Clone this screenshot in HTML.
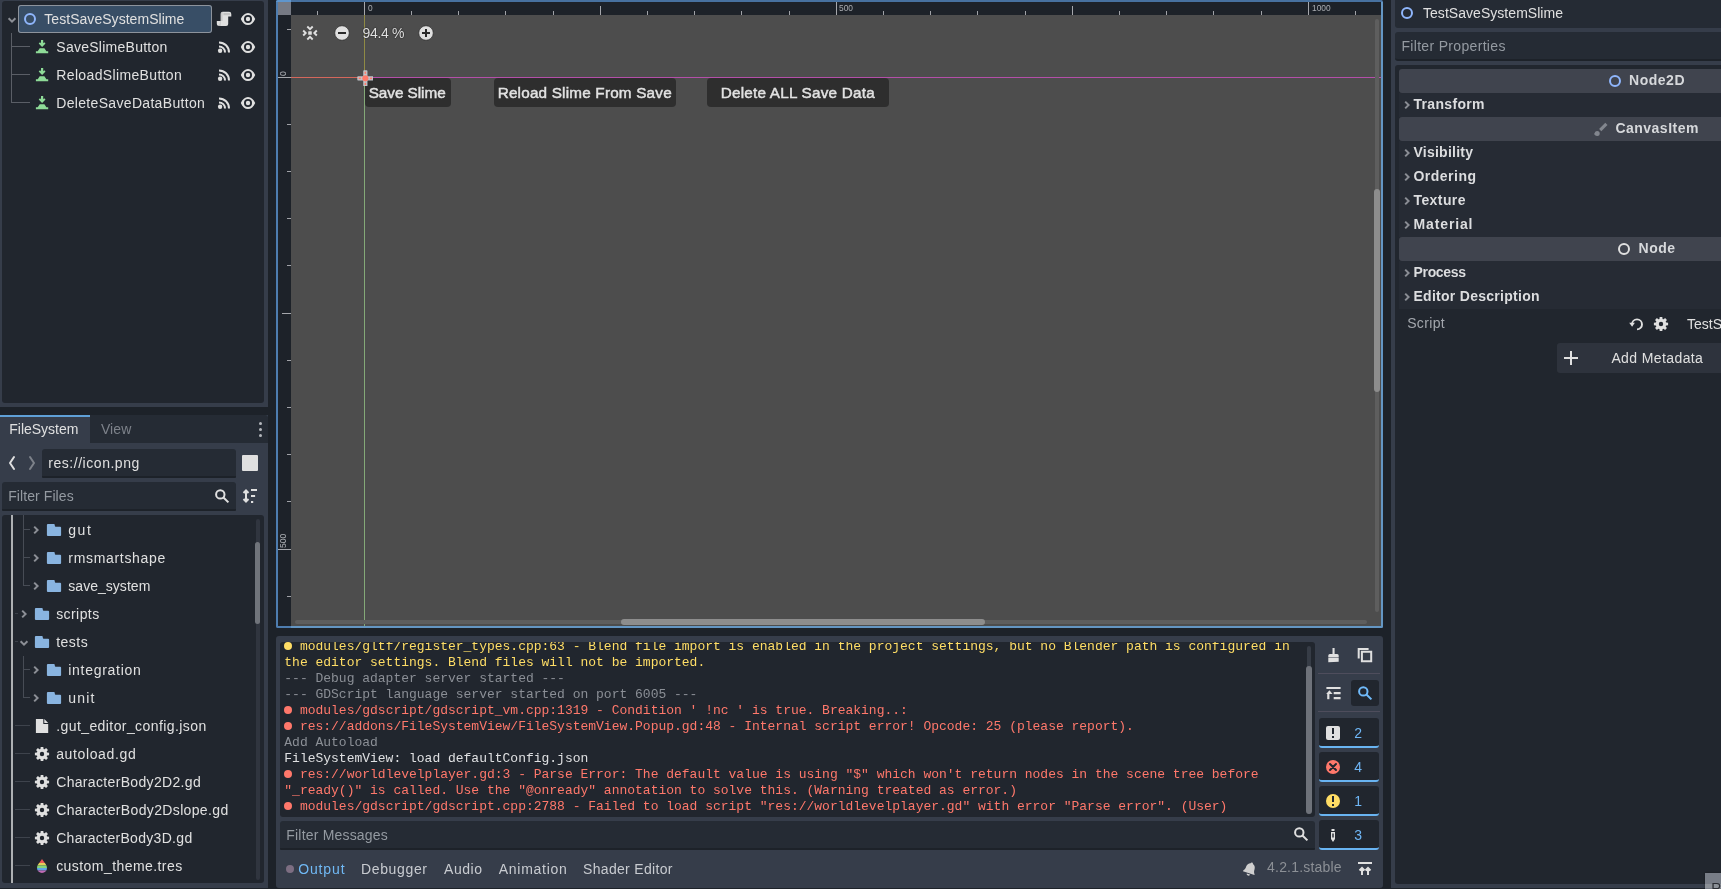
<!DOCTYPE html>
<html><head><meta charset="utf-8"><title>Godot</title>
<style>
html,body{margin:0;padding:0;background:#363d4a;overflow:hidden;}
body{width:1721px;height:889px;position:relative;overflow:hidden;font-family:"Liberation Sans",sans-serif;}
#r{position:absolute;left:0;top:0;width:1721px;height:889px;will-change:transform;overflow:hidden;}
.b{position:absolute;display:block;}
.t{position:absolute;white-space:pre;line-height:20px;height:20px;}
.m{font-family:"Liberation Mono",monospace;}
</style></head><body><div id="r">
<div class="b" style="left:0px;top:0px;width:1721px;height:889px;background:#363d4a;"></div>
<div class="b" style="left:268px;top:0px;width:1123px;height:889px;background:#1d2229;"></div>
<div class="b" style="left:0px;top:407px;width:268px;height:8px;background:#1d2229;"></div>
<div class="b" style="left:2px;top:1px;width:262px;height:402px;background:#21262e;border-radius:3px;"></div>
<div class="b" style="left:18px;top:5px;width:194px;height:28px;background:#384e66;border-radius:3px;box-shadow:inset 0 0 0 1px #8d939c;"></div>
<svg class="b" style="left:6px;top:15.5px;" width="12" height="8" viewBox="0 0 12 8"><path d="M2.6 2.2l3.4 3.4L9.4 2.2" fill="none" stroke="#8c8f96" stroke-width="2" stroke-linecap="butt" stroke-linejoin="miter"/></svg>
<svg class="b" style="left:22px;top:11px;" width="16" height="16" viewBox="0 0 16 16"><circle cx="8" cy="8" r="5" fill="none" stroke="#8fb6fc" stroke-width="2"/></svg>
<span class="t" style="left:44.30px;top:9.35px;font-size:14px;color:#e0e0e0;font-weight:400;letter-spacing:0.041px;">TestSaveSystemSlime</span>
<svg class="b" style="left:216px;top:11px;" width="16" height="16" viewBox="0 0 16 16"><path fill="#e0e0e0" d="M6.600 .7a2 2 0 0 0-2 2v7.400H.8v2.500a2.500 2.500 0 0 0 2.500 2.500h6.900a2 2 0 0 0 2-2V5.400h3.100V2.900a2.200 2.200 0 0 0-2.200-2.200z"/><path fill="#000" opacity=".13" d="M4.600 10.100h-.7v2.500a1.400 1.400 0 0 1-1.300 1.400c.2.600.4 1.100.7 1.100h1.300zM7.400 2h5.900a.9.900 0 0 1 .9.900v1.300H7.400z"/><path fill="#000" opacity=".1" d="M4.600 2.700a2 2 0 0 1 2-2v9.400h-2z"/></svg>
<svg class="b" style="left:240px;top:11px;" width="16" height="16" viewBox="0 0 16 16"><path fill="#e0e0e0" fill-rule="evenodd" d="M0.8 8C2.3 4.2 5 1.9 8 1.9s5.7 2.3 7.2 6.1C13.7 11.8 11 14.1 8 14.1S2.3 11.8 0.8 8zM8 4a4 4 0 1 0 0 8 4 4 0 0 0 0-8zm0 1.8a2.2 2.2 0 1 1 0 4.4 2.2 2.2 0 0 1 0-4.4z"/></svg>
<div class="b" style="left:11px;top:33px;width:1px;height:70px;background:#5a5e66;"></div>
<div class="b" style="left:11px;top:46px;width:19px;height:1px;background:#5a5e66;"></div>
<svg class="b" style="left:34px;top:39px;" width="16" height="16" viewBox="0 0 16 16"><path fill="#8edb98" d="M7 1h2.2v3.3l1-1L11.5 4.6 8.1 8 4.7 4.6 6 3.3l1 1zM5.7 9.2h4.7l2 3H14.2v2H1.9v-2h1.8z"/></svg>
<span class="t" style="left:56.30px;top:37.35px;font-size:14px;color:#e0e0e0;font-weight:400;letter-spacing:0.258px;">SaveSlimeButton</span>
<svg class="b" style="left:216px;top:39px;" width="16" height="16" viewBox="0 0 16 16"><g fill="none" stroke="#e0e0e0" stroke-width="2"><path d="M3 3.4a10 10 0 0 1 10 10"/><path d="M3 7.4a6 6 0 0 1 6 6"/></g><circle cx="4.1" cy="11.8" r="2.2" fill="#e0e0e0"/></svg>
<svg class="b" style="left:240px;top:39px;" width="16" height="16" viewBox="0 0 16 16"><path fill="#e0e0e0" fill-rule="evenodd" d="M0.8 8C2.3 4.2 5 1.9 8 1.9s5.7 2.3 7.2 6.1C13.7 11.8 11 14.1 8 14.1S2.3 11.8 0.8 8zM8 4a4 4 0 1 0 0 8 4 4 0 0 0 0-8zm0 1.8a2.2 2.2 0 1 1 0 4.4 2.2 2.2 0 0 1 0-4.4z"/></svg>
<div class="b" style="left:11px;top:74px;width:19px;height:1px;background:#5a5e66;"></div>
<svg class="b" style="left:34px;top:67px;" width="16" height="16" viewBox="0 0 16 16"><path fill="#8edb98" d="M7 1h2.2v3.3l1-1L11.5 4.6 8.1 8 4.7 4.6 6 3.3l1 1zM5.7 9.2h4.7l2 3H14.2v2H1.9v-2h1.8z"/></svg>
<span class="t" style="left:56.30px;top:65.35px;font-size:14px;color:#e0e0e0;font-weight:400;letter-spacing:0.353px;">ReloadSlimeButton</span>
<svg class="b" style="left:216px;top:67px;" width="16" height="16" viewBox="0 0 16 16"><g fill="none" stroke="#e0e0e0" stroke-width="2"><path d="M3 3.4a10 10 0 0 1 10 10"/><path d="M3 7.4a6 6 0 0 1 6 6"/></g><circle cx="4.1" cy="11.8" r="2.2" fill="#e0e0e0"/></svg>
<svg class="b" style="left:240px;top:67px;" width="16" height="16" viewBox="0 0 16 16"><path fill="#e0e0e0" fill-rule="evenodd" d="M0.8 8C2.3 4.2 5 1.9 8 1.9s5.7 2.3 7.2 6.1C13.7 11.8 11 14.1 8 14.1S2.3 11.8 0.8 8zM8 4a4 4 0 1 0 0 8 4 4 0 0 0 0-8zm0 1.8a2.2 2.2 0 1 1 0 4.4 2.2 2.2 0 0 1 0-4.4z"/></svg>
<div class="b" style="left:11px;top:102px;width:19px;height:1px;background:#5a5e66;"></div>
<svg class="b" style="left:34px;top:95px;" width="16" height="16" viewBox="0 0 16 16"><path fill="#8edb98" d="M7 1h2.2v3.3l1-1L11.5 4.6 8.1 8 4.7 4.6 6 3.3l1 1zM5.7 9.2h4.7l2 3H14.2v2H1.9v-2h1.8z"/></svg>
<span class="t" style="left:56.30px;top:93.35px;font-size:14px;color:#e0e0e0;font-weight:400;letter-spacing:0.320px;">DeleteSaveDataButton</span>
<svg class="b" style="left:216px;top:95px;" width="16" height="16" viewBox="0 0 16 16"><g fill="none" stroke="#e0e0e0" stroke-width="2"><path d="M3 3.4a10 10 0 0 1 10 10"/><path d="M3 7.4a6 6 0 0 1 6 6"/></g><circle cx="4.1" cy="11.8" r="2.2" fill="#e0e0e0"/></svg>
<svg class="b" style="left:240px;top:95px;" width="16" height="16" viewBox="0 0 16 16"><path fill="#e0e0e0" fill-rule="evenodd" d="M0.8 8C2.3 4.2 5 1.9 8 1.9s5.7 2.3 7.2 6.1C13.7 11.8 11 14.1 8 14.1S2.3 11.8 0.8 8zM8 4a4 4 0 1 0 0 8 4 4 0 0 0 0-8zm0 1.8a2.2 2.2 0 1 1 0 4.4 2.2 2.2 0 0 1 0-4.4z"/></svg>
<div class="b" style="left:0px;top:415px;width:268px;height:28px;background:#252b34;border-radius:0 3px 0 0;"></div>
<div class="b" style="left:0px;top:415px;width:90px;height:28px;background:#363d4a;"></div>
<div class="b" style="left:0px;top:415px;width:90px;height:2.3px;background:#5fa0d7;"></div>
<span class="t" style="left:9.30px;top:418.85px;font-size:14px;color:#e0e0e0;font-weight:400;letter-spacing:-0.026px;">FileSystem</span>
<span class="t" style="left:100.90px;top:418.85px;font-size:14px;color:#7d828a;font-weight:400;letter-spacing:0.123px;">View</span>
<div class="b" style="left:258.8px;top:422.2px;width:3px;height:3px;background:#b4b7bc;border-radius:50%;"></div>
<div class="b" style="left:258.8px;top:428.2px;width:3px;height:3px;background:#b4b7bc;border-radius:50%;"></div>
<div class="b" style="left:258.8px;top:434.2px;width:3px;height:3px;background:#b4b7bc;border-radius:50%;"></div>
<svg class="b" style="left:7px;top:455px;" width="10" height="16" viewBox="0 0 10 16"><path d="M7 2L3 8l4 6" fill="none" stroke="#e0e0e0" stroke-width="2" stroke-linecap="round" stroke-linejoin="round"/></svg>
<svg class="b" style="left:27px;top:455px;" width="10" height="16" viewBox="0 0 10 16"><path d="M3 2l4 6-4 6" fill="none" stroke="#7d828a" stroke-width="2" stroke-linecap="round" stroke-linejoin="round"/></svg>
<div class="b" style="left:42px;top:449px;width:194px;height:28.5px;background:#252b34;border-radius:3px 3px 1px 1px;border-bottom:2px solid #1d2229;box-sizing:border-box;"></div>
<span class="t" style="left:48.30px;top:453.15px;font-size:14px;color:#e0e0e0;font-weight:400;letter-spacing:0.535px;">res://icon.png</span>
<div class="b" style="left:242px;top:455px;width:16px;height:16px;background:#e0e0e0;border-radius:1px;"></div>
<div class="b" style="left:2px;top:482px;width:234px;height:28.5px;background:#252b34;border-radius:3px 3px 1px 1px;border-bottom:2px solid #1d2229;box-sizing:border-box;"></div>
<span class="t" style="left:8.20px;top:486.15px;font-size:14px;color:#949aa1;font-weight:400;letter-spacing:0.086px;">Filter Files</span>
<svg class="b" style="left:213.5px;top:488px;" width="16" height="16" viewBox="0 0 16 16"><circle cx="6.3" cy="6.4" r="4.2" fill="none" stroke="#e0e0e0" stroke-width="2"/><path d="M9.4 9.5l5 4.9" stroke="#e0e0e0" stroke-width="2" stroke-linecap="butt"/></svg>
<svg class="b" style="left:242px;top:488px;" width="16" height="16" viewBox="0 0 16 16"><g fill="none" stroke="#e0e0e0" stroke-width="2"><path d="M4 2.5v11M1.5 5L4 2.5 6.5 5M1.5 11L4 13.5 6.5 11"/><path d="M9 2h6M9 8h4.100M9 14h2.200" stroke-width="2.2"/></g></svg>
<div class="b" style="left:2px;top:515px;width:262px;height:368px;background:#21262e;border-radius:3px;"></div>
<div class="b" style="left:11px;top:515px;width:2px;height:368px;background:#aeb0b3;"></div>
<div class="b" style="left:23px;top:515px;width:1px;height:71px;background:#474c55;"></div>
<div class="b" style="left:256px;top:519px;width:4px;height:361px;background:#30353f;border-radius:2px;"></div>
<div class="b" style="left:255.4px;top:542px;width:5px;height:82px;background:#70747b;border-radius:2.5px;"></div>
<div class="b" style="left:23px;top:529px;width:7px;height:1px;background:#474c55;"></div>
<svg class="b" style="left:31.799999999999997px;top:524px;" width="8" height="12" viewBox="0 0 8 12"><path d="M2.2 2.6l3.4 3.4L2.2 9.4" fill="none" stroke="#8c8f96" stroke-width="2" stroke-linecap="butt" stroke-linejoin="miter"/></svg>
<svg class="b" style="left:46px;top:522px;" width="16" height="16" viewBox="0 0 16 16"><path fill="#89b4e0" d="M1.9 2a1 1 0 0 0-1 1v10.1a1 1 0 0 0 1 1h12.2a1 1 0 0 0 1-1V5.7a1 1 0 0 0-1-1H9.8a1 1 0 0 1-1-1V3a1 1 0 0 0-1-1z"/></svg>
<span class="t" style="left:68.30px;top:520.35px;font-size:14px;color:#e0e0e0;font-weight:400;letter-spacing:1.518px;">gut</span>
<div class="b" style="left:23px;top:557px;width:7px;height:1px;background:#474c55;"></div>
<svg class="b" style="left:31.799999999999997px;top:552px;" width="8" height="12" viewBox="0 0 8 12"><path d="M2.2 2.6l3.4 3.4L2.2 9.4" fill="none" stroke="#8c8f96" stroke-width="2" stroke-linecap="butt" stroke-linejoin="miter"/></svg>
<svg class="b" style="left:46px;top:550px;" width="16" height="16" viewBox="0 0 16 16"><path fill="#89b4e0" d="M1.9 2a1 1 0 0 0-1 1v10.1a1 1 0 0 0 1 1h12.2a1 1 0 0 0 1-1V5.7a1 1 0 0 0-1-1H9.8a1 1 0 0 1-1-1V3a1 1 0 0 0-1-1z"/></svg>
<span class="t" style="left:68.30px;top:548.35px;font-size:14px;color:#e0e0e0;font-weight:400;letter-spacing:0.685px;">rmsmartshape</span>
<div class="b" style="left:23px;top:585px;width:7px;height:1px;background:#474c55;"></div>
<svg class="b" style="left:31.799999999999997px;top:580px;" width="8" height="12" viewBox="0 0 8 12"><path d="M2.2 2.6l3.4 3.4L2.2 9.4" fill="none" stroke="#8c8f96" stroke-width="2" stroke-linecap="butt" stroke-linejoin="miter"/></svg>
<svg class="b" style="left:46px;top:578px;" width="16" height="16" viewBox="0 0 16 16"><path fill="#89b4e0" d="M1.9 2a1 1 0 0 0-1 1v10.1a1 1 0 0 0 1 1h12.2a1 1 0 0 0 1-1V5.7a1 1 0 0 0-1-1H9.8a1 1 0 0 1-1-1V3a1 1 0 0 0-1-1z"/></svg>
<span class="t" style="left:68.30px;top:576.35px;font-size:14px;color:#e0e0e0;font-weight:400;letter-spacing:0.030px;">save_system</span>
<div class="b" style="left:15px;top:613px;width:3px;height:1px;background:#3b4049;"></div>
<svg class="b" style="left:19.8px;top:608px;" width="8" height="12" viewBox="0 0 8 12"><path d="M2.2 2.6l3.4 3.4L2.2 9.4" fill="none" stroke="#8c8f96" stroke-width="2" stroke-linecap="butt" stroke-linejoin="miter"/></svg>
<svg class="b" style="left:34px;top:606px;" width="16" height="16" viewBox="0 0 16 16"><path fill="#89b4e0" d="M1.9 2a1 1 0 0 0-1 1v10.1a1 1 0 0 0 1 1h12.2a1 1 0 0 0 1-1V5.7a1 1 0 0 0-1-1H9.8a1 1 0 0 1-1-1V3a1 1 0 0 0-1-1z"/></svg>
<span class="t" style="left:56.20px;top:604.35px;font-size:14px;color:#e0e0e0;font-weight:400;letter-spacing:0.425px;">scripts</span>
<div class="b" style="left:15px;top:641px;width:3px;height:1px;background:#3b4049;"></div>
<svg class="b" style="left:17.8px;top:638.5px;" width="12" height="8" viewBox="0 0 12 8"><path d="M2.6 2.2l3.4 3.4L9.4 2.2" fill="none" stroke="#8c8f96" stroke-width="2" stroke-linecap="butt" stroke-linejoin="miter"/></svg>
<svg class="b" style="left:34px;top:634px;" width="16" height="16" viewBox="0 0 16 16"><path fill="#89b4e0" d="M1.9 2a1 1 0 0 0-1 1v10.1a1 1 0 0 0 1 1h12.2a1 1 0 0 0 1-1V5.7a1 1 0 0 0-1-1H9.8a1 1 0 0 1-1-1V3a1 1 0 0 0-1-1z"/></svg>
<span class="t" style="left:56.20px;top:632.35px;font-size:14px;color:#e0e0e0;font-weight:400;letter-spacing:0.484px;">tests</span>
<div class="b" style="left:23px;top:669px;width:7px;height:1px;background:#474c55;"></div>
<svg class="b" style="left:31.799999999999997px;top:664px;" width="8" height="12" viewBox="0 0 8 12"><path d="M2.2 2.6l3.4 3.4L2.2 9.4" fill="none" stroke="#8c8f96" stroke-width="2" stroke-linecap="butt" stroke-linejoin="miter"/></svg>
<svg class="b" style="left:46px;top:662px;" width="16" height="16" viewBox="0 0 16 16"><path fill="#89b4e0" d="M1.9 2a1 1 0 0 0-1 1v10.1a1 1 0 0 0 1 1h12.2a1 1 0 0 0 1-1V5.7a1 1 0 0 0-1-1H9.8a1 1 0 0 1-1-1V3a1 1 0 0 0-1-1z"/></svg>
<span class="t" style="left:68.30px;top:660.35px;font-size:14px;color:#e0e0e0;font-weight:400;letter-spacing:0.712px;">integration</span>
<div class="b" style="left:23px;top:697px;width:7px;height:1px;background:#474c55;"></div>
<svg class="b" style="left:31.799999999999997px;top:692px;" width="8" height="12" viewBox="0 0 8 12"><path d="M2.2 2.6l3.4 3.4L2.2 9.4" fill="none" stroke="#8c8f96" stroke-width="2" stroke-linecap="butt" stroke-linejoin="miter"/></svg>
<svg class="b" style="left:46px;top:690px;" width="16" height="16" viewBox="0 0 16 16"><path fill="#89b4e0" d="M1.9 2a1 1 0 0 0-1 1v10.1a1 1 0 0 0 1 1h12.2a1 1 0 0 0 1-1V5.7a1 1 0 0 0-1-1H9.8a1 1 0 0 1-1-1V3a1 1 0 0 0-1-1z"/></svg>
<span class="t" style="left:68.30px;top:688.35px;font-size:14px;color:#e0e0e0;font-weight:400;letter-spacing:1.142px;">unit</span>
<div class="b" style="left:15px;top:725px;width:15px;height:1px;background:#3e434c;"></div>
<svg class="b" style="left:34px;top:718px;" width="16" height="16" viewBox="0 0 16 16"><path fill="#e0e0e0" d="M1.9.9v14.2h12.3V5.9H9.3V.9zm8.4 0v4h3.9z"/></svg>
<span class="t" style="left:56.20px;top:716.35px;font-size:14px;color:#e0e0e0;font-weight:400;letter-spacing:0.415px;">.gut_editor_config.json</span>
<div class="b" style="left:15px;top:753px;width:15px;height:1px;background:#3e434c;"></div>
<svg class="b" style="left:34px;top:746px;" width="16" height="16" viewBox="0 0 16 16"><path d="M6.7 0.9h2.6l.4 3.4H6.3z" transform="rotate(0 8 8)" fill="#e0e0e0"/><path d="M6.7 0.9h2.6l.4 3.4H6.3z" transform="rotate(45 8 8)" fill="#e0e0e0"/><path d="M6.7 0.9h2.6l.4 3.4H6.3z" transform="rotate(90 8 8)" fill="#e0e0e0"/><path d="M6.7 0.9h2.6l.4 3.4H6.3z" transform="rotate(135 8 8)" fill="#e0e0e0"/><path d="M6.7 0.9h2.6l.4 3.4H6.3z" transform="rotate(180 8 8)" fill="#e0e0e0"/><path d="M6.7 0.9h2.6l.4 3.4H6.3z" transform="rotate(225 8 8)" fill="#e0e0e0"/><path d="M6.7 0.9h2.6l.4 3.4H6.3z" transform="rotate(270 8 8)" fill="#e0e0e0"/><path d="M6.7 0.9h2.6l.4 3.4H6.3z" transform="rotate(315 8 8)" fill="#e0e0e0"/><circle cx="8" cy="8" r="3.7" fill="none" stroke="#e0e0e0" stroke-width="3"/></svg>
<span class="t" style="left:56.20px;top:744.35px;font-size:14px;color:#e0e0e0;font-weight:400;letter-spacing:0.632px;">autoload.gd</span>
<div class="b" style="left:15px;top:781px;width:15px;height:1px;background:#3e434c;"></div>
<svg class="b" style="left:34px;top:774px;" width="16" height="16" viewBox="0 0 16 16"><path d="M6.7 0.9h2.6l.4 3.4H6.3z" transform="rotate(0 8 8)" fill="#e0e0e0"/><path d="M6.7 0.9h2.6l.4 3.4H6.3z" transform="rotate(45 8 8)" fill="#e0e0e0"/><path d="M6.7 0.9h2.6l.4 3.4H6.3z" transform="rotate(90 8 8)" fill="#e0e0e0"/><path d="M6.7 0.9h2.6l.4 3.4H6.3z" transform="rotate(135 8 8)" fill="#e0e0e0"/><path d="M6.7 0.9h2.6l.4 3.4H6.3z" transform="rotate(180 8 8)" fill="#e0e0e0"/><path d="M6.7 0.9h2.6l.4 3.4H6.3z" transform="rotate(225 8 8)" fill="#e0e0e0"/><path d="M6.7 0.9h2.6l.4 3.4H6.3z" transform="rotate(270 8 8)" fill="#e0e0e0"/><path d="M6.7 0.9h2.6l.4 3.4H6.3z" transform="rotate(315 8 8)" fill="#e0e0e0"/><circle cx="8" cy="8" r="3.7" fill="none" stroke="#e0e0e0" stroke-width="3"/></svg>
<span class="t" style="left:56.20px;top:772.35px;font-size:14px;color:#e0e0e0;font-weight:400;letter-spacing:0.332px;">CharacterBody2D2.gd</span>
<div class="b" style="left:15px;top:809px;width:15px;height:1px;background:#3e434c;"></div>
<svg class="b" style="left:34px;top:802px;" width="16" height="16" viewBox="0 0 16 16"><path d="M6.7 0.9h2.6l.4 3.4H6.3z" transform="rotate(0 8 8)" fill="#e0e0e0"/><path d="M6.7 0.9h2.6l.4 3.4H6.3z" transform="rotate(45 8 8)" fill="#e0e0e0"/><path d="M6.7 0.9h2.6l.4 3.4H6.3z" transform="rotate(90 8 8)" fill="#e0e0e0"/><path d="M6.7 0.9h2.6l.4 3.4H6.3z" transform="rotate(135 8 8)" fill="#e0e0e0"/><path d="M6.7 0.9h2.6l.4 3.4H6.3z" transform="rotate(180 8 8)" fill="#e0e0e0"/><path d="M6.7 0.9h2.6l.4 3.4H6.3z" transform="rotate(225 8 8)" fill="#e0e0e0"/><path d="M6.7 0.9h2.6l.4 3.4H6.3z" transform="rotate(270 8 8)" fill="#e0e0e0"/><path d="M6.7 0.9h2.6l.4 3.4H6.3z" transform="rotate(315 8 8)" fill="#e0e0e0"/><circle cx="8" cy="8" r="3.7" fill="none" stroke="#e0e0e0" stroke-width="3"/></svg>
<span class="t" style="left:56.20px;top:800.35px;font-size:14px;color:#e0e0e0;font-weight:400;letter-spacing:0.354px;">CharacterBody2Dslope.gd</span>
<div class="b" style="left:15px;top:837px;width:15px;height:1px;background:#3e434c;"></div>
<svg class="b" style="left:34px;top:830px;" width="16" height="16" viewBox="0 0 16 16"><path d="M6.7 0.9h2.6l.4 3.4H6.3z" transform="rotate(0 8 8)" fill="#e0e0e0"/><path d="M6.7 0.9h2.6l.4 3.4H6.3z" transform="rotate(45 8 8)" fill="#e0e0e0"/><path d="M6.7 0.9h2.6l.4 3.4H6.3z" transform="rotate(90 8 8)" fill="#e0e0e0"/><path d="M6.7 0.9h2.6l.4 3.4H6.3z" transform="rotate(135 8 8)" fill="#e0e0e0"/><path d="M6.7 0.9h2.6l.4 3.4H6.3z" transform="rotate(180 8 8)" fill="#e0e0e0"/><path d="M6.7 0.9h2.6l.4 3.4H6.3z" transform="rotate(225 8 8)" fill="#e0e0e0"/><path d="M6.7 0.9h2.6l.4 3.4H6.3z" transform="rotate(270 8 8)" fill="#e0e0e0"/><path d="M6.7 0.9h2.6l.4 3.4H6.3z" transform="rotate(315 8 8)" fill="#e0e0e0"/><circle cx="8" cy="8" r="3.7" fill="none" stroke="#e0e0e0" stroke-width="3"/></svg>
<span class="t" style="left:56.20px;top:828.35px;font-size:14px;color:#e0e0e0;font-weight:400;letter-spacing:0.310px;">CharacterBody3D.gd</span>
<div class="b" style="left:15px;top:865px;width:15px;height:1px;background:#3e434c;"></div>
<svg class="b" style="left:34px;top:858px;" width="16" height="16" viewBox="0 0 16 16"><defs><clipPath id="dr"><path d="M8 1c-.75 1.305-1.654 2.427-2.482 3.451C4.196 6.091 3 7.541 3 10a5 5 0 0 0 10 0c0-2.459-1.196-3.909-2.518-5.549C9.654 3.427 8.75 2.305 8 1z"/></clipPath></defs><g clip-path="url(#dr)"><rect x="0" y="0" width="16" height="5" fill="#ea5a57"/><rect x="0" y="5" width="16" height="2.500" fill="#e3cf5a"/><rect x="0" y="7.500" width="16" height="2.500" fill="#84d67c"/><rect x="0" y="10" width="16" height="2.500" fill="#5fa4e6"/><rect x="0" y="12.500" width="16" height="3" fill="#c06ab4"/></g></svg>
<span class="t" style="left:56.20px;top:856.35px;font-size:14px;color:#e0e0e0;font-weight:400;letter-spacing:0.434px;">custom_theme.tres</span>
<div class="b" style="left:23px;top:656px;width:1px;height:42px;background:#474c55;"></div>
<div class="b" style="left:276px;top:0px;width:1107px;height:628px;background:#4e7daf;border-radius:2px;"></div>
<div class="b" style="left:278px;top:0px;width:1103px;height:2px;background:#47719f;"></div>
<div class="b" style="left:276px;top:0px;width:15px;height:2px;background:#5f96cd;border-radius:2px 0 0 0;"></div>
<div class="b" style="left:1381px;top:2px;width:2px;height:626px;background:#6496c3;border-radius:0 0 2px 0;"></div>
<div class="b" style="left:276px;top:626px;width:15px;height:2px;background:#4e7daf;border-radius:0 0 0 2px;"></div>
<div class="b" style="left:291px;top:626px;width:1092px;height:2px;background:#6496c3;border-radius:0 0 2px 0;"></div>
<div class="b" style="left:278px;top:2px;width:1103px;height:624px;background:#4d4d4d;"></div>
<div class="b" style="left:278px;top:2px;width:1103px;height:13px;background:#1d2229;"></div>
<div class="b" style="left:278px;top:2px;width:13px;height:624px;background:#1d2229;"></div>
<div class="b" style="left:278px;top:2px;width:13px;height:13px;background:#767a84;"></div>
<div class="b" style="left:317px;top:11px;width:1px;height:4px;background:#a0a2a7;"></div>
<div class="b" style="left:364px;top:2px;width:1px;height:13px;background:#a5a7ac;"></div>
<div class="b" style="left:411px;top:11px;width:1px;height:4px;background:#a0a2a7;"></div>
<div class="b" style="left:458px;top:11px;width:1px;height:4px;background:#a0a2a7;"></div>
<div class="b" style="left:505px;top:11px;width:1px;height:4px;background:#a0a2a7;"></div>
<div class="b" style="left:553px;top:11px;width:1px;height:4px;background:#a0a2a7;"></div>
<div class="b" style="left:600px;top:6px;width:1px;height:9px;background:#a5a7ac;"></div>
<div class="b" style="left:647px;top:11px;width:1px;height:4px;background:#a0a2a7;"></div>
<div class="b" style="left:694px;top:11px;width:1px;height:4px;background:#a0a2a7;"></div>
<div class="b" style="left:741px;top:11px;width:1px;height:4px;background:#a0a2a7;"></div>
<div class="b" style="left:789px;top:11px;width:1px;height:4px;background:#a0a2a7;"></div>
<div class="b" style="left:836px;top:2px;width:1px;height:13px;background:#a5a7ac;"></div>
<div class="b" style="left:883px;top:11px;width:1px;height:4px;background:#a0a2a7;"></div>
<div class="b" style="left:930px;top:11px;width:1px;height:4px;background:#a0a2a7;"></div>
<div class="b" style="left:977px;top:11px;width:1px;height:4px;background:#a0a2a7;"></div>
<div class="b" style="left:1025px;top:11px;width:1px;height:4px;background:#a0a2a7;"></div>
<div class="b" style="left:1072px;top:6px;width:1px;height:9px;background:#a5a7ac;"></div>
<div class="b" style="left:1119px;top:11px;width:1px;height:4px;background:#a0a2a7;"></div>
<div class="b" style="left:1166px;top:11px;width:1px;height:4px;background:#a0a2a7;"></div>
<div class="b" style="left:1213px;top:11px;width:1px;height:4px;background:#a0a2a7;"></div>
<div class="b" style="left:1261px;top:11px;width:1px;height:4px;background:#a0a2a7;"></div>
<div class="b" style="left:1308px;top:2px;width:1px;height:13px;background:#a5a7ac;"></div>
<div class="b" style="left:1355px;top:11px;width:1px;height:4px;background:#a0a2a7;"></div>
<div class="b" style="left:287px;top:29px;width:4px;height:1px;background:#a0a2a7;"></div>
<div class="b" style="left:278px;top:77px;width:13px;height:1px;background:#a5a7ac;"></div>
<div class="b" style="left:287px;top:124px;width:4px;height:1px;background:#a0a2a7;"></div>
<div class="b" style="left:287px;top:171px;width:4px;height:1px;background:#a0a2a7;"></div>
<div class="b" style="left:287px;top:218px;width:4px;height:1px;background:#a0a2a7;"></div>
<div class="b" style="left:287px;top:265px;width:4px;height:1px;background:#a0a2a7;"></div>
<div class="b" style="left:282px;top:313px;width:9px;height:1px;background:#a5a7ac;"></div>
<div class="b" style="left:287px;top:360px;width:4px;height:1px;background:#a0a2a7;"></div>
<div class="b" style="left:287px;top:407px;width:4px;height:1px;background:#a0a2a7;"></div>
<div class="b" style="left:287px;top:454px;width:4px;height:1px;background:#a0a2a7;"></div>
<div class="b" style="left:287px;top:501px;width:4px;height:1px;background:#a0a2a7;"></div>
<div class="b" style="left:278px;top:549px;width:13px;height:1px;background:#a5a7ac;"></div>
<div class="b" style="left:287px;top:596px;width:4px;height:1px;background:#a0a2a7;"></div>
<span class="t" style="left:367.60px;top:-1.92px;font-size:9px;color:#a9acb1;font-weight:400;transform:scaleX(.93);transform-origin:0 0;">0</span>
<span class="t" style="left:839.30px;top:-1.92px;font-size:9px;color:#a9acb1;font-weight:400;transform:scaleX(.93);transform-origin:0 0;">500</span>
<span class="t" style="left:1311.60px;top:-1.92px;font-size:9px;color:#a9acb1;font-weight:400;transform:scaleX(.93);transform-origin:0 0;">1000</span>
<span class="t" style="left:279.4px;top:76.1px;font-size:9px;color:#a9acb1;transform-origin:0 0;transform:rotate(-90deg) scaleX(.95);line-height:9px;">0</span>
<span class="t" style="left:279.4px;top:548.4px;font-size:9px;color:#a9acb1;transform-origin:0 0;transform:rotate(-90deg) scaleX(.95);line-height:9px;">500</span>
<div class="b" style="left:291px;top:77px;width:73px;height:1px;background:#d5675c;"></div>
<div class="b" style="left:364px;top:77px;width:1017px;height:1px;background:#b44fa9;"></div>
<div class="b" style="left:364px;top:15px;width:1px;height:62px;background:#8f8a45;"></div>
<div class="b" style="left:364px;top:78px;width:1px;height:548px;background:#84a978;"></div>
<svg class="b" style="left:302px;top:24.9px;" width="16" height="16" viewBox="0 0 16 16"><rect x="6.200" y="6.200" width="3.600" height="3.600" rx=".6" fill="#e0e0e0"/><g fill="none" stroke="#e0e0e0" stroke-width="1.9"><path d="M5.300 1.500L8 4.100l2.700-2.600M5.300 14.500L8 11.900l2.700 2.600M1.200 5.500L3.700 8 1.200 10.500M14.800 5.500L12.300 8l2.500 2.500"/></g></svg>
<svg class="b" style="left:334px;top:25px;" width="16" height="16" viewBox="0 0 16 16"><circle cx="8" cy="8" r="7.300" fill="#e0e0e0" stroke="#2c2c2c" stroke-opacity=".75" stroke-width="1"/><rect x="4" y="7" width="8" height="2" fill="#2a2a2a"/></svg>
<span class="t" style="left:362.50px;top:23.35px;font-size:14px;color:#e0e0e0;font-weight:400;letter-spacing:-0.317px;text-shadow:0 0 1.5px #1e1e1e,0 0 1px #1e1e1e;">94.4 %</span>
<svg class="b" style="left:418px;top:25px;" width="16" height="16" viewBox="0 0 16 16"><circle cx="8" cy="8" r="7.300" fill="#e0e0e0" stroke="#2c2c2c" stroke-opacity=".75" stroke-width="1"/><path d="M4 7h3V4h2v3h3v2H9v3H7V9H4z" fill="#2a2a2a"/></svg>
<div class="b" style="left:365px;top:78px;width:85.5px;height:29px;background:#2e2e2e;border-radius:4px;"></div>
<span class="t" style="left:368.70px;top:82.90px;font-size:15.3px;color:#e2e2e2;font-weight:400;letter-spacing:-0.042px;-webkit-text-stroke:0.45px #e2e2e2;">Save Slime</span>
<div class="b" style="left:494px;top:78px;width:182px;height:29px;background:#2e2e2e;border-radius:4px;"></div>
<span class="t" style="left:497.70px;top:82.90px;font-size:15.3px;color:#e2e2e2;font-weight:400;letter-spacing:0.188px;-webkit-text-stroke:0.45px #e2e2e2;">Reload Slime From Save</span>
<div class="b" style="left:707.3px;top:78px;width:182px;height:29px;background:#2e2e2e;border-radius:4px;"></div>
<span class="t" style="left:720.70px;top:82.90px;font-size:15.3px;color:#e2e2e2;font-weight:400;letter-spacing:0.211px;-webkit-text-stroke:0.45px #e2e2e2;">Delete ALL Save Data</span>
<svg class="b" style="left:356.6px;top:69.5px;" width="16.7" height="16.7" viewBox="0 0 17 17"><g fill="#c9cdd3" opacity=".92"><rect x="6.35" y=".3" width="4.3" height="16.4" rx=".8"/><rect x=".3" y="6.35" width="16.4" height="4.3" rx=".8"/></g><g fill="#ff7a6a"><circle cx="8.500" cy="8.500" r="3.100"/><rect x="7.700" y="1.700" width="1.600" height="2.200"/><rect x="7.700" y="13.100" width="1.600" height="2.200"/><rect x="1.700" y="7.700" width="2.200" height="1.600"/><rect x="13.100" y="7.700" width="2.200" height="1.600"/></g></svg>
<div class="b" style="left:1375px;top:19px;width:4px;height:593px;background:#5e5e5e;border-radius:2px;"></div>
<div class="b" style="left:1374px;top:189px;width:6px;height:203px;background:#8d8d8d;border-radius:3px;"></div>
<div class="b" style="left:295px;top:620px;width:1072px;height:4.4px;background:#5e5e5e;border-radius:2px;"></div>
<div class="b" style="left:621px;top:619px;width:364px;height:6px;background:#8d8d8d;border-radius:3px;"></div>
<div class="b" style="left:276px;top:636px;width:1107px;height:251.6px;background:#363d4a;border-radius:3px;"></div>
<div class="b" style="left:280px;top:642px;width:1035px;height:174.5px;background:#21262e;border-radius:3px;overflow:hidden;">
<div class="b" style="left:3.9px;top:0.0px;width:8.4px;height:8.4px;border-radius:50%;background:#ffde66;"></div>
<span class="t m" style="left:19.90px;top:-5.26px;font-size:13px;color:#ffde66;font-weight:400;letter-spacing:-0.007px;">modules/gltf/register_types.cpp:63 - Blend file import is enabled in the project settings, but no Blender path is configured in</span>
<span class="t m" style="left:4.30px;top:10.74px;font-size:13px;color:#ffde66;font-weight:400;letter-spacing:-0.007px;">the editor settings. Blend files will not be imported.</span>
<span class="t m" style="left:4.30px;top:26.74px;font-size:13px;color:#8b8f96;font-weight:400;letter-spacing:-0.007px;">--- Debug adapter server started ---</span>
<span class="t m" style="left:4.30px;top:42.74px;font-size:13px;color:#8b8f96;font-weight:400;letter-spacing:-0.007px;">--- GDScript language server started on port 6005 ---</span>
<div class="b" style="left:3.9px;top:64.0px;width:8.4px;height:8.4px;border-radius:50%;background:#ff786b;"></div>
<span class="t m" style="left:19.90px;top:58.74px;font-size:13px;color:#ff786b;font-weight:400;letter-spacing:-0.007px;">modules/gdscript/gdscript_vm.cpp:1319 - Condition ' !nc ' is true. Breaking..:</span>
<div class="b" style="left:3.9px;top:80.0px;width:8.4px;height:8.4px;border-radius:50%;background:#ff786b;"></div>
<span class="t m" style="left:19.90px;top:74.74px;font-size:13px;color:#ff786b;font-weight:400;letter-spacing:-0.007px;">res://addons/FileSystemView/FileSystemView.Popup.gd:48 - Internal script error! Opcode: 25 (please report).</span>
<span class="t m" style="left:4.30px;top:90.74px;font-size:13px;color:#8b8f96;font-weight:400;letter-spacing:-0.007px;">Add Autoload</span>
<span class="t m" style="left:4.30px;top:106.74px;font-size:13px;color:#dfe0e2;font-weight:400;letter-spacing:-0.007px;">FileSystemView: load defaultConfig.json</span>
<div class="b" style="left:3.9px;top:128.0px;width:8.4px;height:8.4px;border-radius:50%;background:#ff786b;"></div>
<span class="t m" style="left:19.90px;top:122.74px;font-size:13px;color:#ff786b;font-weight:400;letter-spacing:-0.007px;">res://worldlevelplayer.gd:3 - Parse Error: The default value is using "$" which won't return nodes in the scene tree before</span>
<span class="t m" style="left:4.30px;top:138.74px;font-size:13px;color:#ff786b;font-weight:400;letter-spacing:-0.007px;">"_ready()" is called. Use the "@onready" annotation to solve this. (Warning treated as error.)</span>
<div class="b" style="left:3.9px;top:160.0px;width:8.4px;height:8.4px;border-radius:50%;background:#ff786b;"></div>
<span class="t m" style="left:19.90px;top:154.74px;font-size:13px;color:#ff786b;font-weight:400;letter-spacing:-0.007px;">modules/gdscript/gdscript.cpp:2788 - Failed to load script "res://worldlevelplayer.gd" with error "Parse error". (User)</span>
</div>
<div class="b" style="left:1307px;top:646px;width:4px;height:167.5px;background:#363c46;border-radius:2px;"></div>
<div class="b" style="left:1306px;top:666px;width:6px;height:148px;background:#6e727a;border-radius:3px;"></div>
<div class="b" style="left:280px;top:821px;width:1035px;height:29px;background:#252b34;border-radius:3px 3px 1px 1px;border-bottom:2px solid #1d2229;box-sizing:border-box;"></div>
<span class="t" style="left:286.30px;top:825.15px;font-size:14px;color:#949aa1;font-weight:400;letter-spacing:0.192px;">Filter Messages</span>
<svg class="b" style="left:1292.8px;top:826.3px;" width="16" height="16" viewBox="0 0 16 16"><circle cx="6.3" cy="6.4" r="4.2" fill="none" stroke="#e0e0e0" stroke-width="2"/><path d="M9.4 9.5l5 4.9" stroke="#e0e0e0" stroke-width="2" stroke-linecap="butt"/></svg>
<svg class="b" style="left:1324.5px;top:647px;" width="16" height="16" viewBox="0 0 16 16"><path fill="#e0e0e0" d="M7.500 1h2.100v6h2.600a1.500 1.500 0 0 1 1.500 1.500v1.900H3.300V8.500A1.500 1.500 0 0 1 4.800 7h2.700zM3.300 11h10.400v3.700L3.300 15.200z"/></svg>
<svg class="b" style="left:1357px;top:647px;" width="16" height="16" viewBox="0 0 16 16"><path fill="none" stroke="#e0e0e0" stroke-width="2" d="M4.900 4.800h9.300v9.400H4.900z"/><path fill="none" stroke="#e0e0e0" stroke-width="2" d="M1.700 11.500V2H11.600"/></svg>
<div class="b" style="left:1318px;top:673px;width:62px;height:1px;background:#4e4d5c;"></div>
<svg class="b" style="left:1324.5px;top:685px;" width="16" height="16" viewBox="0 0 16 16"><g fill="none" stroke="#e0e0e0" stroke-width="2.2"><path d="M1.400 3h14.200M8.700 8.100h6.900M8.700 13.100h6.900"/></g><path d="M3.300 14.200V8.500" stroke="#e0e0e0" stroke-width="2.200" fill="none"/><path d="M1.200 8.900L4.400 5.200 7.600 8.900z" fill="#e0e0e0"/></svg>
<div class="b" style="left:1351px;top:680px;width:28px;height:26px;background:#21262e;border-radius:3px;"></div>
<svg class="b" style="left:1357px;top:685px;" width="16" height="16" viewBox="0 0 16 16"><circle cx="6.3" cy="6.4" r="4.2" fill="none" stroke="#70bafa" stroke-width="2"/><path d="M9.4 9.5l5 4.9" stroke="#70bafa" stroke-width="2" stroke-linecap="butt"/></svg>
<div class="b" style="left:1318px;top:711px;width:62px;height:1px;background:#4e4d5c;"></div>
<div class="b" style="left:1319px;top:718px;width:60px;height:29.5px;background:#21262e;border-radius:3px;border-bottom:2px solid #69b4f2;box-sizing:border-box;"></div>
<svg class="b" style="left:1325px;top:725px;" width="16" height="16" viewBox="0 0 16 16"><rect x="1" y="1" width="14" height="14" rx="2" fill="#e0e0e0"/><path d="M7 3h2v6H7zM7 11h2v2H7z" fill="#21262e"/></svg>
<span class="t" style="left:1354.30px;top:723.45px;font-size:14px;color:#6fb6f5;font-weight:400;">2</span>
<div class="b" style="left:1319px;top:752px;width:60px;height:29.5px;background:#21262e;border-radius:3px;border-bottom:2px solid #69b4f2;box-sizing:border-box;"></div>
<svg class="b" style="left:1325px;top:759px;" width="16" height="16" viewBox="0 0 16 16"><circle cx="8" cy="8" r="7" fill="#ff786b"/><path d="M5 5l6 6M11 5l-6 6" stroke="#21262e" stroke-width="2" stroke-linecap="round"/></svg>
<span class="t" style="left:1354.30px;top:757.45px;font-size:14px;color:#6fb6f5;font-weight:400;">4</span>
<div class="b" style="left:1319px;top:786px;width:60px;height:29.5px;background:#21262e;border-radius:3px;border-bottom:2px solid #69b4f2;box-sizing:border-box;"></div>
<svg class="b" style="left:1325px;top:793px;" width="16" height="16" viewBox="0 0 16 16"><circle cx="8" cy="8" r="7" fill="#ffdd65"/><path d="M7 3h2v6H7zM7 11h2v2H7z" fill="#21262e"/></svg>
<span class="t" style="left:1354.30px;top:791.45px;font-size:14px;color:#6fb6f5;font-weight:400;">1</span>
<div class="b" style="left:1319px;top:820px;width:60px;height:29.5px;background:#21262e;border-radius:3px;border-bottom:2px solid #69b4f2;box-sizing:border-box;"></div>
<svg class="b" style="left:1325px;top:827px;" width="16" height="16" viewBox="0 0 16 16"><path fill="#e0e0e0" d="M6.5 2h3v2h-3zM6 5h4v7l-2 3-2-3z"/><path fill="#21262e" d="M7.3 6.5h1.4v4H7.3z"/></svg>
<span class="t" style="left:1354.30px;top:825.45px;font-size:14px;color:#6fb6f5;font-weight:400;">3</span>
<div class="b" style="left:286.1px;top:864.9px;width:8px;height:8px;background:#7d6e82;border-radius:50%;"></div>
<span class="t" style="left:298.20px;top:858.95px;font-size:14px;color:#70b9f5;font-weight:400;letter-spacing:0.874px;">Output</span>
<span class="t" style="left:361.00px;top:858.95px;font-size:14px;color:#c8cbd0;font-weight:400;letter-spacing:0.644px;">Debugger</span>
<span class="t" style="left:444.00px;top:858.95px;font-size:14px;color:#c8cbd0;font-weight:400;letter-spacing:0.549px;">Audio</span>
<span class="t" style="left:498.80px;top:858.95px;font-size:14px;color:#c8cbd0;font-weight:400;letter-spacing:0.718px;">Animation</span>
<span class="t" style="left:583.00px;top:858.95px;font-size:14px;color:#c8cbd0;font-weight:400;letter-spacing:0.324px;">Shader Editor</span>
<svg class="b" style="left:1242px;top:861px;" width="16" height="16" viewBox="0 0 16 16"><g transform="rotate(18 8 8)" fill="#cfcfcf"><path d="M8 1.2c.7 0 1.2.5 1.2 1.1 2 .6 3.200 2.400 3.200 4.500 0 2.200.5 3.600 1.600 4.700v.8H2v-.8c1.100-1.100 1.600-2.500 1.600-4.700 0-2.100 1.200-3.900 3.200-4.500 0-.6.500-1.100 1.200-1.100z"/><path d="M6.300 13.200h3.400a1.700 1.700 0 0 1-3.400 0z"/></g></svg>
<span class="t" style="left:1267.10px;top:856.95px;font-size:14px;color:#8c9096;font-weight:400;letter-spacing:0.183px;">4.2.1.stable</span>
<svg class="b" style="left:1357px;top:860.9px;" width="16" height="16" viewBox="0 0 16 16"><g fill="none" stroke="#e0e0e0" stroke-width="2"><path d="M1 2h14"/><path d="M5 14V7M2.5 9.5L5 7l2.5 2.5M11 14V7M8.5 9.5L11 7l2.5 2.5"/></g></svg>
<div class="b" style="left:1395px;top:0px;width:326px;height:28px;background:#252b34;border-radius:0 0 0 3px;"></div>
<svg class="b" style="left:1399px;top:5px;" width="16" height="16" viewBox="0 0 16 16"><circle cx="8" cy="8" r="5" fill="none" stroke="#8fb6fc" stroke-width="2"/></svg>
<span class="t" style="left:1423.00px;top:2.95px;font-size:14px;color:#e0e0e0;font-weight:400;letter-spacing:0.041px;">TestSaveSystemSlime</span>
<div class="b" style="left:1395px;top:32px;width:326px;height:28.5px;background:#252b34;border-radius:3px 0 0 3px;border-bottom:2px solid #1d2229;box-sizing:border-box;"></div>
<span class="t" style="left:1401.40px;top:35.65px;font-size:14px;color:#949aa1;font-weight:400;letter-spacing:0.325px;">Filter Properties</span>
<div class="b" style="left:1395px;top:65px;width:326px;height:818.7px;background:#21262e;border-radius:3px 0 0 3px;"></div>
<div class="b" style="left:1399px;top:68.5px;width:322px;height:24px;background:#40444e;border-radius:3px 0 0 3px;"></div>
<svg class="b" style="left:1607px;top:72.5px;" width="16" height="16" viewBox="0 0 16 16"><circle cx="8" cy="8" r="5" fill="none" stroke="#8fb6fc" stroke-width="2"/></svg>
<span class="t" style="left:1629.00px;top:70.45px;font-size:14px;color:#d6d8db;font-weight:700;letter-spacing:0.521px;">Node2D</span>
<div class="b" style="left:1399px;top:92.5px;width:322px;height:24px;background:#262b34;"></div>
<svg class="b" style="left:1402.9px;top:99.0px;" width="8" height="12" viewBox="0 0 8 12"><path d="M2.2 2.6l3.4 3.4L2.2 9.4" fill="none" stroke="#8a8d94" stroke-width="2" stroke-linecap="butt" stroke-linejoin="miter"/></svg>
<span class="t" style="left:1413.50px;top:94.45px;font-size:14px;color:#dcdddf;font-weight:700;letter-spacing:0.318px;">Transform</span>
<div class="b" style="left:1399px;top:116.5px;width:322px;height:24px;background:#40444e;border-radius:3px 0 0 3px;"></div>
<svg class="b" style="left:1593px;top:120.5px;" width="16" height="16" viewBox="0 0 16 16"><path d="M13.4 2.8L7.2 9.1" stroke="#82868e" stroke-width="3.1" fill="none"/><circle cx="4.2" cy="12.4" r="2.5" fill="#82868e"/><path d="M0.9 13.300L3 10.800l2 4z" fill="#82868e"/></svg>
<span class="t" style="left:1615.40px;top:118.45px;font-size:14px;color:#d6d8db;font-weight:700;letter-spacing:0.490px;">CanvasItem</span>
<div class="b" style="left:1399px;top:140.5px;width:322px;height:24px;background:#262b34;"></div>
<svg class="b" style="left:1402.9px;top:147.0px;" width="8" height="12" viewBox="0 0 8 12"><path d="M2.2 2.6l3.4 3.4L2.2 9.4" fill="none" stroke="#8a8d94" stroke-width="2" stroke-linecap="butt" stroke-linejoin="miter"/></svg>
<span class="t" style="left:1413.50px;top:142.45px;font-size:14px;color:#dcdddf;font-weight:700;letter-spacing:0.243px;">Visibility</span>
<div class="b" style="left:1399px;top:164.5px;width:322px;height:24px;background:#262b34;"></div>
<svg class="b" style="left:1402.9px;top:171.0px;" width="8" height="12" viewBox="0 0 8 12"><path d="M2.2 2.6l3.4 3.4L2.2 9.4" fill="none" stroke="#8a8d94" stroke-width="2" stroke-linecap="butt" stroke-linejoin="miter"/></svg>
<span class="t" style="left:1413.50px;top:166.45px;font-size:14px;color:#dcdddf;font-weight:700;letter-spacing:0.483px;">Ordering</span>
<div class="b" style="left:1399px;top:188.5px;width:322px;height:24px;background:#262b34;"></div>
<svg class="b" style="left:1402.9px;top:195.0px;" width="8" height="12" viewBox="0 0 8 12"><path d="M2.2 2.6l3.4 3.4L2.2 9.4" fill="none" stroke="#8a8d94" stroke-width="2" stroke-linecap="butt" stroke-linejoin="miter"/></svg>
<span class="t" style="left:1413.50px;top:190.45px;font-size:14px;color:#dcdddf;font-weight:700;letter-spacing:0.411px;">Texture</span>
<div class="b" style="left:1399px;top:212.5px;width:322px;height:24px;background:#262b34;"></div>
<svg class="b" style="left:1402.9px;top:219.0px;" width="8" height="12" viewBox="0 0 8 12"><path d="M2.2 2.6l3.4 3.4L2.2 9.4" fill="none" stroke="#8a8d94" stroke-width="2" stroke-linecap="butt" stroke-linejoin="miter"/></svg>
<span class="t" style="left:1413.50px;top:214.45px;font-size:14px;color:#dcdddf;font-weight:700;letter-spacing:0.870px;">Material</span>
<div class="b" style="left:1399px;top:236.5px;width:322px;height:24px;background:#40444e;border-radius:3px 0 0 3px;"></div>
<svg class="b" style="left:1615.7px;top:240.5px;" width="16" height="16" viewBox="0 0 16 16"><circle cx="8" cy="8" r="5" fill="none" stroke="#e0e0e0" stroke-width="2"/></svg>
<span class="t" style="left:1638.60px;top:238.45px;font-size:14px;color:#d6d8db;font-weight:700;letter-spacing:0.501px;">Node</span>
<div class="b" style="left:1399px;top:260.5px;width:322px;height:24px;background:#262b34;"></div>
<svg class="b" style="left:1402.9px;top:267.0px;" width="8" height="12" viewBox="0 0 8 12"><path d="M2.2 2.6l3.4 3.4L2.2 9.4" fill="none" stroke="#8a8d94" stroke-width="2" stroke-linecap="butt" stroke-linejoin="miter"/></svg>
<span class="t" style="left:1413.50px;top:262.45px;font-size:14px;color:#dcdddf;font-weight:700;letter-spacing:-0.330px;">Process</span>
<div class="b" style="left:1399px;top:284.5px;width:322px;height:24px;background:#262b34;"></div>
<svg class="b" style="left:1402.9px;top:291.0px;" width="8" height="12" viewBox="0 0 8 12"><path d="M2.2 2.6l3.4 3.4L2.2 9.4" fill="none" stroke="#8a8d94" stroke-width="2" stroke-linecap="butt" stroke-linejoin="miter"/></svg>
<span class="t" style="left:1413.50px;top:286.45px;font-size:14px;color:#dcdddf;font-weight:700;letter-spacing:0.274px;">Editor Description</span>
<span class="t" style="left:1407.20px;top:312.55px;font-size:14px;color:#a3a7ad;font-weight:400;letter-spacing:0.342px;">Script</span>
<svg class="b" style="left:1628px;top:316px;" width="16" height="16" viewBox="0 0 16 16"><path d="M4 8.400A5 5 0 1 1 9 13.400" fill="none" stroke="#e0e0e0" stroke-width="1.9"/><path d="M1.200 6.700h5.700L4.100 10.700z" fill="#e0e0e0"/></svg>
<svg class="b" style="left:1653px;top:316px;" width="16" height="16" viewBox="0 0 16 16"><path d="M6.7 0.9h2.6l.4 3.4H6.3z" transform="rotate(0 8 8)" fill="#e0e0e0"/><path d="M6.7 0.9h2.6l.4 3.4H6.3z" transform="rotate(45 8 8)" fill="#e0e0e0"/><path d="M6.7 0.9h2.6l.4 3.4H6.3z" transform="rotate(90 8 8)" fill="#e0e0e0"/><path d="M6.7 0.9h2.6l.4 3.4H6.3z" transform="rotate(135 8 8)" fill="#e0e0e0"/><path d="M6.7 0.9h2.6l.4 3.4H6.3z" transform="rotate(180 8 8)" fill="#e0e0e0"/><path d="M6.7 0.9h2.6l.4 3.4H6.3z" transform="rotate(225 8 8)" fill="#e0e0e0"/><path d="M6.7 0.9h2.6l.4 3.4H6.3z" transform="rotate(270 8 8)" fill="#e0e0e0"/><path d="M6.7 0.9h2.6l.4 3.4H6.3z" transform="rotate(315 8 8)" fill="#e0e0e0"/><circle cx="8" cy="8" r="3.7" fill="none" stroke="#e0e0e0" stroke-width="3"/></svg>
<span class="t" style="left:1687.00px;top:313.55px;font-size:14px;color:#e0e0e0;font-weight:400;">TestS</span>
<div class="b" style="left:1557px;top:343px;width:164px;height:30px;background:#2e333d;border-radius:3px 0 0 3px;"></div>
<svg class="b" style="left:1563px;top:350px;" width="16" height="16" viewBox="0 0 16 16"><path d="M7 1h2v6h6v2H9v6H7V9H1V7h6z" fill="#e0e0e0"/></svg>
<span class="t" style="left:1611.40px;top:347.65px;font-size:14px;color:#e0e0e0;font-weight:400;letter-spacing:0.392px;">Add Metadata</span>
<div class="b" style="left:0px;top:887.7px;width:1721px;height:2px;background:#1d2229;"></div>
<div class="b" style="left:1705px;top:873px;width:16px;height:16px;background:#787d87;box-shadow:0 0 2px rgba(0,0,0,.35);"></div>
<div class="b" style="left:1705px;top:884px;width:16px;height:4px;background:#8b9097;"></div>
<span class="t" style="left:1711.20px;top:878.35px;font-size:14px;color:#2a2d33;font-weight:400;">Re</span>
</div></body></html>
